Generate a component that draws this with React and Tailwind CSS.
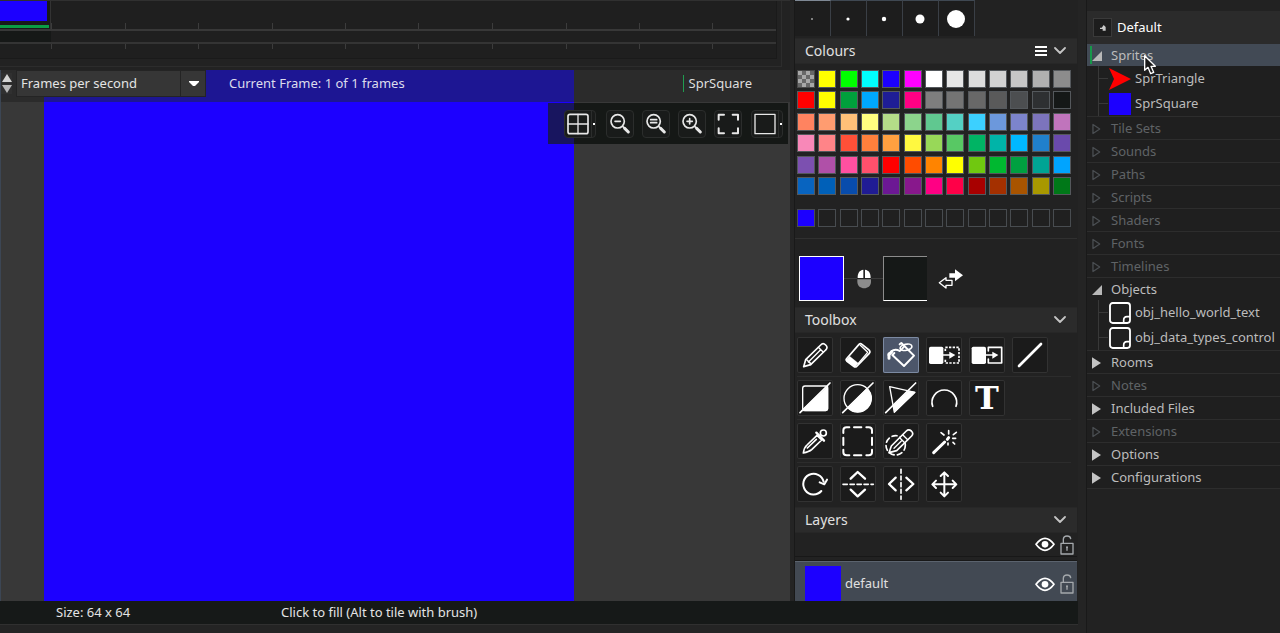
import React from "react";

const SWATCHES = [
  ["checker", "#ffff00", "#00ff00", "#00ffff", "#1c00ff", "#ff00ff", "#ffffff", "#e6e6e6", "#dcdcdc", "#d2d2d2", "#c6c6c6", "#b0b0b0", "#8c8c8c"],
  ["#ff0000", "#ffff00", "#00a03c", "#00a8ff", "#1f1d96", "#ff0084", "#7e7e7e", "#747474", "#686868", "#5a5a5a", "#4c4e50", "#2e3032", "#151817"],
  ["#ff8360", "#ff9c70", "#ffc078", "#ffff80", "#b4dc88", "#8cd48c", "#60c890", "#54d0c4", "#3cd0ff", "#6c98dc", "#7c84cc", "#7c74bc", "#c074bc"],
  ["#f888b8", "#ff8488", "#ff5038", "#ff803c", "#ffa040", "#fff840", "#98d858", "#58c864", "#00b464", "#00b4a8", "#00b8ff", "#2080cc", "#6a4aac"],
  ["#7c50b0", "#b050a8", "#ff50a0", "#ff506c", "#ff0000", "#ff4c00", "#ff8400", "#ffff00", "#70c810", "#00b830", "#00a040", "#00a494", "#00a4ff"],
  ["#0864c0", "#0060b8", "#084cac", "#201c94", "#6c1894", "#88188c", "#ff0084", "#ff0048", "#a80000", "#a43000", "#a85400", "#a89800", "#007818"],
];

const TREE = [
  {
    name: "Sprites", state: "open", selected: true,
    children: [{ name: "SprTriangle", icon: "triangle" }, { name: "SprSquare", icon: "square" }],
  },
  { name: "Tile Sets", state: "empty" },
  { name: "Sounds", state: "empty" },
  { name: "Paths", state: "empty" },
  { name: "Scripts", state: "empty" },
  { name: "Shaders", state: "empty" },
  { name: "Fonts", state: "empty" },
  { name: "Timelines", state: "empty" },
  {
    name: "Objects", state: "open",
    children: [{ name: "obj_hello_world_text", icon: "object" }, { name: "obj_data_types_control", icon: "object" }],
  },
  { name: "Rooms", state: "closed" },
  { name: "Notes", state: "empty" },
  { name: "Included Files", state: "closed" },
  { name: "Extensions", state: "empty" },
  { name: "Options", state: "closed" },
  { name: "Configurations", state: "closed" },
];

const TOOLS = [
  [
    { name: "Pencil", art: <g strokeWidth="5"><path d="M20 89 26 68 71 24Q78 16 86 24 94 32 86 39L41 83Z" /><path d="M26 68Q33 68 34 75 41 76 41 83M64 31 79 46M35 74 71 38" strokeWidth="4" /></g> },
    { name: "Eraser", art: <g><path d="M19 66 57 22Q61 18 66 22L87 39Q92 44 88 49L50 88Q46 92 41 88L20 72Q17 69 19 66Z" strokeWidth="5" /><path d="M29 58 55 79 45 90 18 70Z" fill="currentColor" /><path d="M55 79 83 46 61 25" strokeWidth="4" /></g> },
    { name: "Fill", active: true, art: <g strokeWidth="6"><path d="M50 22 55 18 93 56 63 87 28 54 34 48" /><ellipse cx="69" cy="31" rx="18" ry="9" transform="rotate(-12 69 31)" strokeWidth="5" /><path d="M50 42Q56 38 62 30M50 42Q36 34 24 44" /><path d="M18 50V64M26 44 17 54" strokeWidth="9" /></g> },
    { name: "Replace colour", art: <g><rect x="9" y="29" width="43" height="52" rx="5" fill="currentColor" stroke="none" /><path d="M52 54H74" strokeWidth="5" /><path d="M70 44 88 54 70 65Z" fill="currentColor" stroke="none" /><path d="M58 42V31H99V78H58V66" strokeWidth="5" strokeDasharray="7 4" strokeLinecap="butt" /></g> },
    { name: "Replace all colour", art: <g><rect x="8" y="29" width="43" height="52" rx="5" fill="currentColor" stroke="none" /><path d="M51 54H74" strokeWidth="5" /><path d="M70 44 88 54 70 65Z" fill="currentColor" stroke="none" /><path d="M58 42V31H98V78H58V66" strokeWidth="5" /></g> },
    { name: "Line", art: <path d="M21 87 87 21" strokeWidth="8" /> },
  ],
  [
    { name: "Rectangle", art: <g><rect x="17" y="18" width="75" height="74" rx="7" strokeWidth="4" /><path d="M92 18V86Q92 92 86 92H15Z" fill="currentColor" strokeWidth="3" /><path d="M9 98 99 9" strokeWidth="5" /></g> },
    { name: "Ellipse", art: <g><circle cx="53" cy="55" r="41" strokeWidth="4" /><path d="M82 26A41 41 0 0 1 24 84Z" fill="currentColor" strokeWidth="3" /><path d="M8 98 99 9" strokeWidth="5" /></g> },
    { name: "Polygon", art: <g><path d="M20 20 96 37 34 97Z" strokeWidth="4" /><path d="M76 33 96 37 35 96 31 76Z" fill="currentColor" strokeWidth="3" /><path d="M8 98 98 9" strokeWidth="5" /></g> },
    { name: "Arc", art: <path d="M20 79A37 37 0 1 1 90 79" strokeWidth="5" /> },
    { name: "Text", text: true },
  ],
  [
    { name: "Colour picker", art: <g strokeWidth="5"><path d="M19 90Q21 74 30 66L60 37 74 51 44 80Q36 87 19 90ZM31 75 58 49" /><path d="M58 29 81 53" strokeWidth="7" /><circle cx="79" cy="30" r="9" /></g> },
    { name: "Selection", art: <g strokeWidth="6"><path d="M10 30V22Q10 13 20 13H28M79 13H86Q96 13 96 22V30M96 80V88Q96 97 86 97H79M28 97H20Q10 97 10 88V80" /><path d="M42 13H64M42 97H64M10 44V66M96 44V66" /></g> },
    { name: "Brush selection", art: <g strokeWidth="5"><circle cx="38" cy="67" r="29" strokeDasharray="15 10" /><path d="M18 89 25 69 70 24Q77 17 85 24 93 32 86 39L41 83Z" className="fill-[#1b1b1b]" /><path d="M59 35 74 50M50 44 65 59M33 76 55 54" strokeWidth="4" /></g> },
    { name: "Magic wand", art: <g><path d="M23 89 56 57" strokeWidth="9" /><path d="M64 49 68 44" strokeWidth="9" /><path d="M68 23V33M45 29 54 36M91 28 82 35M80 46H89M81 58 86 63M66 60V66" strokeWidth="5" /></g> },
  ],
  [
    { name: "Rotate", art: <g><path d="M73 75A31 31 0 1 1 80 47" strokeWidth="6" /><path d="M68 49 82 55 90 41" strokeWidth="6" /></g> },
    { name: "Flip vertically", art: <g><path d="M32 38 53 18 75 38M32 71 53 91 75 71" strokeWidth="7" /><path d="M9 55H100" strokeWidth="5" strokeDasharray="13 8" /></g> },
    { name: "Flip horizontally", art: <g><path d="M38 35 18 54 38 73M70 35 91 54 70 73" strokeWidth="7" /><path d="M54 10V100" strokeWidth="5" strokeDasharray="12 8" /></g> },
    { name: "Move", art: <path d="M55 20V90M20 55H90M44 30 55 19 66 30M44 80 55 91 66 80M30 44 19 55 30 66M80 44 91 55 80 66" strokeWidth="6" /> },
  ],
];

const BRUSHES = [0.8, 1.6, 2.2, 4.5, 9];

function Art({ children, className, box = "0 0 108 108" }) {
  return (
    <svg viewBox={box} className={className} fill="none" stroke="currentColor" strokeLinecap="round" strokeLinejoin="round" aria-hidden="true">
      {children}
    </svg>
  );
}

function Timeline() {
  const ticks = [51, 125, 198, 272, 345, 418, 492, 566, 639, 712];
  return (
    <div className="h-[70px] overflow-hidden border-t border-[#303030] bg-[#222] pr-2">
      <div className="h-[66px] border-r border-b border-[#2c2c2c] pr-1">
        <svg className="block h-[58px] w-full border-r border-b border-[#1a1a1a] bg-[#1f1f1f]" aria-hidden="true">
          <rect x="0" y="0" width="50" height="28" fill="#191a1a" />
          <rect x="0" y="0" width="47" height="20" fill="#1c00ff" />
          <rect x="0" y="24" width="49" height="3" fill="#0a9c44" />
          <rect x="50" y="0" width="1" height="28" fill="#333" />
          <rect x="0" y="30" width="51" height="11" fill="#161817" />
          <rect x="0" y="28" width="100%" height="2" fill="#383838" />
          <rect x="0" y="41" width="100%" height="2" fill="#343434" />
          {ticks.map((x) => (
            <path key={x} d={`M${x} 22h1v6h-1zM${x} 43h1v5h-1z`} fill="#3c3c3c" />
          ))}
        </svg>
      </div>
    </div>
  );
}

function CanvasButton({ label, children, menu, className = "" }) {
  return (
    <div className={`flex rounded-sm border border-[#2b2d2c] bg-[#191b1a] ${className}`}>
      <button type="button" aria-label={label} className="flex size-[26px] items-center justify-center text-[#e8e8e8]">
        <Art box="0 0 78 78" className="size-[26px]">{children}</Art>
      </button>
      {menu && (
        <button type="button" aria-label={`${label} options`} className="flex w-1 items-center justify-center border-l border-[#2b2d2c]">
          <span className="h-[2px] w-[2px] bg-white" />
        </button>
      )}
    </div>
  );
}

function Magnifier({ children }) {
  return (
    <g strokeWidth="5">
      <circle cx="32" cy="31" r="20" />
      <path d="M47 46 54 53" />
      <path d="M53 52 64 63" strokeWidth="9" />
      {children}
    </g>
  );
}

function Editor() {
  return (
    <section className="flex min-w-0 flex-1 flex-col">
      <Timeline />
      <div className="relative flex-1 border-l border-[#3c4654] bg-[#383838]">
        <div className="ml-[43px] h-full w-[530px] bg-[#1c00ff]" />
        <div className="absolute inset-x-0 top-0 flex h-8 items-start bg-[rgba(30,44,40,0.5)]">
          <div className="absolute inset-y-0 right-0 left-[573px] bg-[#2b2b2b]" />
          <div className="absolute inset-y-0 left-0 w-[43px] bg-[#2b2b2b]" />
          <div className="relative flex w-[15px] flex-col items-start pt-[3px]">
            <button type="button" aria-label="Increase speed" className="flex h-[10px] w-[11px] items-center justify-center bg-[#303030]">
              <svg viewBox="0 0 10 8" className="h-2 w-[10px]" fill="#d4d4d4"><path d="M5 0 10 8H0Z" /></svg>
            </button>
            <button type="button" aria-label="Decrease speed" className="mt-px flex h-[10px] w-[11px] items-center justify-center bg-[#303030]">
              <svg viewBox="0 0 10 8" className="h-2 w-[10px]" fill="#b8b8b8"><path d="M5 8 10 0H0Z" /></svg>
            </button>
          </div>
          <div className="relative h-[27px] w-[190px]">
            <select aria-label="Speed unit" className="h-full w-full appearance-none border border-[#242424] bg-[#363636] pr-7 pl-1 text-[13px] text-[#e4e4e4]">
              <option>Frames per second</option>
              <option>Frames per game frame</option>
            </select>
            <span className="pointer-events-none absolute inset-y-0 right-0 flex w-[26px] items-center justify-center border-l border-[#242424]">
              <svg viewBox="0 0 10 6" className="h-[6px] w-[10px]" fill="#fff"><path d="M0 0H10V1L6 5H4L0 1Z" /></svg>
            </span>
          </div>
          <p className="relative ml-[23px] flex-1 text-[13px] leading-[26px] text-[#dcdcec]">Current Frame: 1 of 1 frames</p>
          <div className="relative flex h-[27px] items-center pr-[38px]">
            <p className="border-l border-[#1f9c50] pl-[5px] text-[13px] leading-[17px] text-[#dedede]">SprSquare</p>
          </div>
        </div>
        <div className="absolute top-[33px] right-[2px] flex h-[41px] items-center bg-[rgba(20,23,21,0.96)] pr-[5px] pl-4">
          <div className="absolute inset-y-0 left-0 w-[26px] bg-[rgba(34,20,210,0.36)]" />
          <div className="relative flex items-center gap-2">
            <CanvasButton label="Grid" menu className="mr-[2px]">
              <rect x="9" y="10" width="60" height="58" rx="6" strokeWidth="5" />
              <path d="M39 10V68M9 39H69" strokeWidth="4" />
            </CanvasButton>
            <CanvasButton label="Zoom out"><Magnifier><path d="M24 31H40" /></Magnifier></CanvasButton>
            <CanvasButton label="Reset zoom"><Magnifier><path d="M23 26H41M23 35H41" /></Magnifier></CanvasButton>
            <CanvasButton label="Zoom in"><Magnifier><path d="M24 31H40M32 23V39" /></Magnifier></CanvasButton>
            <CanvasButton label="Fit to view" className="mr-px">
              <path d="M11 26V11H27M53 11H69V26M69 52V67H53M27 67H11V52" strokeWidth="6" />
            </CanvasButton>
            <CanvasButton label="Background" menu>
              <rect x="9" y="10" width="60" height="58" strokeWidth="4" />
            </CanvasButton>
          </div>
        </div>
      </div>
    </section>
  );
}

function PanelHeader({ title, menu }) {
  return (
    <header className="flex h-[26px] shrink-0 items-center border-y border-[#272727] bg-[#2b2b2b] px-[10px] text-[#e0e0e0]">
      <h2 className="flex-1 pb-px text-sm leading-[22px]">{title}</h2>
      {menu && (
        <button type="button" aria-label={`${title} menu`} className="mr-[6px]">
          <svg viewBox="0 0 12 10" className="h-[10px] w-3" fill="#fff"><path d="M0 0H12V2H0ZM0 4H12V6H0ZM0 8H12V10H0Z" /></svg>
        </button>
      )}
      <button type="button" aria-label={`Collapse ${title}`}>
        <Art box="0 0 14 8" className="h-2 w-[14px] text-[#c4c4c4]"><path d="M2 1 7 6 12 1" strokeWidth="1.8" /></Art>
      </button>
    </header>
  );
}

function Colours() {
  return (
    <>
      <PanelHeader title="Colours" menu />
      <div className="mt-[6px] flex h-[125px] shrink-0 flex-col justify-between pr-[6px] pl-[2px]">
        {SWATCHES.map((row, r) => (
          <div key={r} className="flex justify-between">
            {row.map((c, i) =>
              c === "checker" ? (
                <button key={i} type="button" aria-label="Transparent" className="size-[18px] border border-[#484848] bg-[#686868]">
                  <svg viewBox="0 0 4 4" className="size-4" fill="#a8a8a8"><path d="M0 0h1v1h-1zM2 0h1v1h-1zM1 1h1v1h-1zM3 1h1v1h-1zM0 2h1v1h-1zM2 2h1v1h-1zM1 3h1v1h-1zM3 3h1v1h-1z" /></svg>
                </button>
              ) : (
                <button key={i} type="button" aria-label={`Colour ${c}`} className="size-[18px] border border-[#54585c]" style={{ backgroundColor: c }} />
              )
            )}
          </div>
        ))}
      </div>
      <div className="mt-[14px] flex shrink-0 justify-between pr-[6px] pl-[2px]">
        {Array.from({ length: 13 }, (_, i) => (
          <button key={i} type="button" aria-label={`Recent colour ${i + 1}`} className={`size-[18px] border border-[#484c50] ${i === 0 ? "bg-[#1c00ff]" : "bg-[#202020]"}`} />
        ))}
      </div>
      <div className="mt-[11px] border-t border-[#303030]" />
      <div className="mt-[17px] flex shrink-0 items-center pl-[4px]">
        <button type="button" aria-label="Left mouse colour" className="h-[45px] w-[45px] border border-white bg-[#1c00ff]" />
        <span className="w-[13px] border-t border-[#3a3a3a]" />
        <Art box="0 0 42 60" className="h-5 w-[14px]">
          <path d="M19 2C7 4 2 12 2 27H19ZM24 2C36 4 41 12 41 27H24Z" fill="#fff" stroke="none" />
          <path d="M1 31H42V38C42 64 1 64 1 38Z" fill="#8c8c8c" stroke="none" />
        </Art>
        <span className="w-3 border-t border-[#3a3a3a]" />
        <button type="button" aria-label="Right mouse colour" className="h-[45px] w-11 border-t border-b border-l border-t-[#8c8c8c] border-b-white border-l-[#8c8c8c] bg-[#151817]" />
        <button type="button" aria-label="Swap colours" className="ml-[11px]">
          <Art box="0 0 78 66" className="h-[22px] w-[26px] text-white">
            <path d="M34 16H51V4L75 22 51 40V29H34Z" fill="currentColor" stroke="none" />
            <path d="M4 44 24 29V37H42V52H24V60Z" strokeWidth="4" />
          </Art>
        </button>
      </div>
    </>
  );
}

function Toolbox() {
  return (
    <div className="flex flex-col pt-1 pr-[6px] pb-[5px] pl-[2px]">
      {TOOLS.map((row, r) => (
        <div key={r} className={`flex gap-[7px] ${r < 3 ? "mb-[3px] border-b border-[#2c2c2c] pb-[3px]" : ""}`}>
          {row.map((t) => (
            <button
              key={t.name}
              type="button"
              aria-label={t.name}
              className={`flex size-9 items-center justify-center rounded-xs text-white ring-1 ring-inset ${t.active ? "bg-[#4c566a] ring-[#7c8aa2]" : "bg-[#1b1b1b] ring-[#323232]"}`}
            >
              {t.text ? (
                <span className="font-['DejaVu_Serif',serif] text-[32px] leading-8 font-bold">T</span>
              ) : (
                <Art className="size-9">{t.art}</Art>
              )}
            </button>
          ))}
        </div>
      ))}
    </div>
  );
}

function LayerToggles() {
  return (
    <div className="flex items-center gap-[5px] pr-[3px]">
      <button type="button" aria-label="Toggle visibility">
        <Art box="0 0 60 45" className="h-[15px] w-5 text-white">
          <path d="M3 22Q30-14 57 22 30 58 3 22Z" strokeWidth="5" />
          <circle cx="30" cy="22" r="10" fill="currentColor" stroke="none" />
        </Art>
      </button>
      <button type="button" aria-label="Toggle lock">
        <Art box="0 0 42 60" className="h-5 w-[14px] text-[#a4a8ac]">
          <rect x="3" y="25" width="36" height="32" strokeWidth="4" />
          <path d="M10 24V12Q11 3 21 3 31 3 32 11M21 37V46" strokeWidth="4" />
          <circle cx="21" cy="37" r="3" fill="currentColor" stroke="none" />
        </Art>
      </button>
    </div>
  );
}

function SidePanel() {
  return (
    <aside className="flex w-[284px] shrink-0 flex-col overflow-hidden border-l border-[#191919] bg-[#222] pr-px">
      <div className="flex h-[38px] shrink-0 items-start">
        {BRUSHES.map((r, i) => (
          <button key={r} type="button" aria-label={`Brush size ${i + 1}`} className={`flex h-9 w-9 items-center justify-center border-t border-r border-r-[#3a3f46] bg-[#1d1d1d] pr-[2px] ${i === 0 ? "border-t-[#7e8894]" : "border-t-[#3f4852]"}`}>
            <svg viewBox="0 0 20 20" className="size-5" fill="#fff"><circle cx="10" cy="10" r={r} /></svg>
          </button>
        ))}
      </div>
      <Colours />
      <div className="h-[6px] shrink-0" />
      <PanelHeader title="Toolbox" />
      <Toolbox />
      <PanelHeader title="Layers" />
      <div className="flex h-[23px] shrink-0 items-center justify-end"><LayerToggles /></div>
      <div className="h-[5px] shrink-0 border-y border-[#181818]" />
      <div className="flex min-h-0 flex-1 items-start border-t border-[#5b636e] bg-[#424953]">
        <div className="mt-[4px] ml-[10px] h-[36px] w-9 bg-[#1c00ff]" />
        <div className="flex h-11 flex-1 items-center pl-1">
          <span className="flex-1 text-[13px] text-[#e0e0e0]">default</span>
          <LayerToggles />
        </div>
      </div>
    </aside>
  );
}

function Disclosure({ state }) {
  if (state === "open")
    return <svg viewBox="0 0 30 30" className="h-[10px] w-[10px]" fill="#b8b8b8"><path d="M30 0V30H0Z" /></svg>;
  if (state === "closed")
    return <svg viewBox="0 0 28 36" className="h-3 w-[9px]" fill="#c4c4c4"><path d="M0 0 28 18 0 36Z" /></svg>;
  return <Art box="0 0 28 36" className="h-3 w-[9px] text-[#4a4e52]"><path d="M3 4 24 18 3 32Z" strokeWidth="4" /></Art>;
}

function AssetIcon({ kind }) {
  if (kind === "triangle")
    return <svg viewBox="0 0 22 22" className="size-[22px]" fill="#ff0000"><path d="M0 0 22 11 0 22 5 11Z" /></svg>;
  if (kind === "square") return <span className="size-[22px] bg-[#1c00ff]" />;
  return (
    <Art box="0 0 66 66" className="size-[22px] text-white">
      <rect x="3" y="3" width="60" height="60" rx="8" strokeWidth="5.5" />
      <path d="M44 61V55Q44 44 54 44H61" strokeWidth="5" />
    </Art>
  );
}

function AssetTree() {
  return (
    <nav aria-label="Assets" className="ml-2 w-[194px] shrink-0 overflow-hidden border-l border-[#191919] bg-[#222] pt-[11px]">
      <div className="flex h-[33px] items-center gap-[5px] bg-[#2b2b2b] pl-[6px]">
        <button type="button" aria-label="View options" className="flex size-[19px] items-center justify-center border border-[#3a3a3a] bg-[#1d1d1d]">
          <svg viewBox="0 0 18 18" className="size-[6px]" fill="#c8c8c8"><path d="M11 0 17 6V17H8V12H0V8H5Z" /></svg>
        </button>
        <h2 className="text-[13px] text-white">Default</h2>
      </div>
      <ul className="bg-[#1f1f1f] text-[13px] whitespace-nowrap text-[#bcbcbc]">
        {TREE.map((n) => (
          <li key={n.name} className="border-b border-[#2d2d2d]">
            <button
              type="button"
              className={`relative flex h-[22px] w-full items-center pt-px text-left ${n.selected ? "bg-[#424a55]" : ""} ${n.state === "empty" ? "text-[#5f6366]" : ""}`}
            >
              {n.selected && <span className="absolute inset-y-[2px] left-[3px] w-[2px] bg-[#17984a]" />}
              <span className="flex w-6 shrink-0 pl-[5px]"><Disclosure state={n.state} /></span>
              {n.name}
              {n.selected && (
                <Art box="0 0 36 60" className="absolute top-[11px] left-[57px] z-10 h-5 w-3">
                  <path d="M2 2V46L12 37 20 56 29 52 21 34H34Z" fill="#1a1a1a" stroke="#fff" strokeWidth="4" />
                </Art>
              )}
            </button>
            {n.children && (
              <ul className="ml-[11px] border-l border-[#383838]">
                {n.children.map((c) => (
                  <li key={c.name} className="flex h-[25px] items-center">
                    <span className="mr-px w-[9px] shrink-0 border-t border-[#383838]" />
                    <button type="button" className="flex items-center gap-1">
                      <span className="flex shrink-0"><AssetIcon kind={c.icon} /></span>
                      {c.name}
                    </button>
                  </li>
                ))}
              </ul>
            )}
          </li>
        ))}
      </ul>
    </nav>
  );
}

export default function App() {
  return (
    <div className="flex h-screen w-full overflow-hidden bg-[#242424] font-['Noto_Sans','Open_Sans',sans-serif] text-[#ddd]">
      <main className="flex min-w-0 flex-1 flex-col">
        <div className="flex min-h-0 flex-1 gap-1">
          <Editor />
          <SidePanel />
        </div>
        <footer className="flex h-[23px] shrink-0 items-center bg-[#161918] pl-[56px] text-[13px] text-[#e4e4e4]">
          <span className="w-[225px]">Size: 64 x 64</span>
          <span>Click to fill (Alt to tile with brush)</span>
        </footer>
        <div className="h-[9px] shrink-0 border-t border-[#303030] bg-[#242424]" />
      </main>
      <AssetTree />
    </div>
  );
}
